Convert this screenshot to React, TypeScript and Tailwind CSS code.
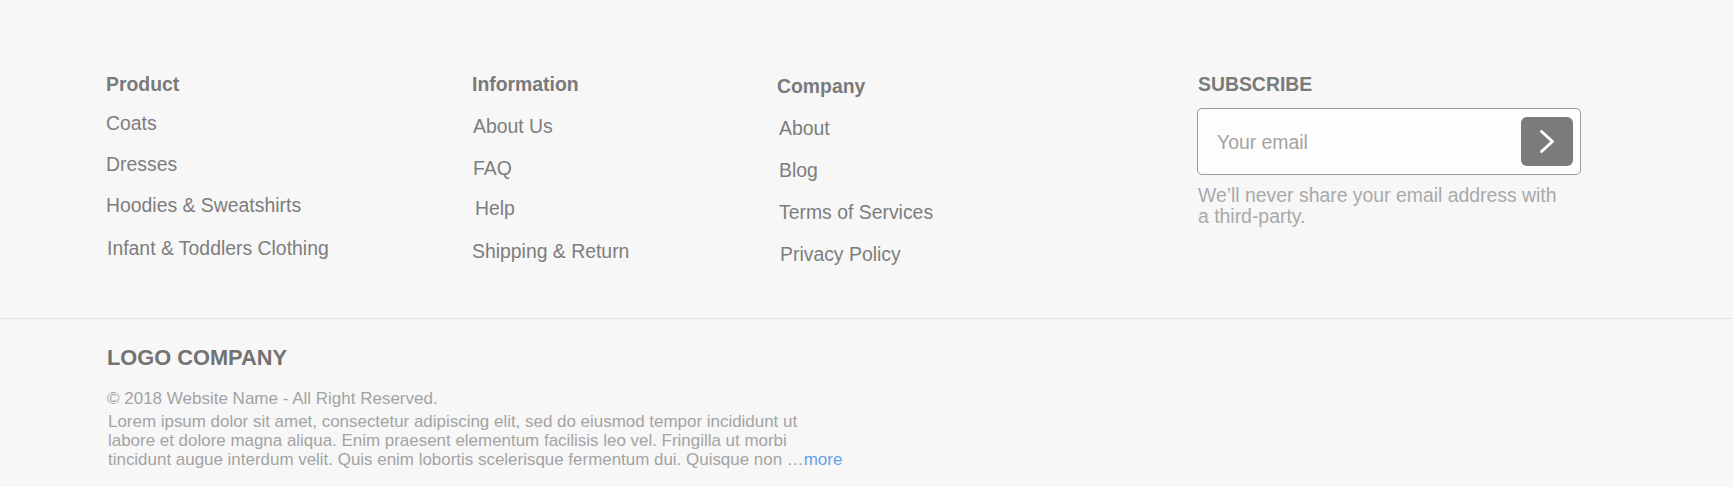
import React from "react";

type LinkItem = { label: string; cls: string };

const product: LinkItem[] = [
  { label: "Coats", cls: "mt-[17px]" },
  { label: "Dresses", cls: "mt-[19px]" },
  { label: "Hoodies & Sweatshirts", cls: "mt-[19px]" },
  { label: "Infant & Toddlers Clothing", cls: "mt-[21px] ml-[1px]" },
];

const information: LinkItem[] = [
  { label: "About Us", cls: "mt-[20px] ml-[1px]" },
  { label: "FAQ", cls: "mt-[20px] ml-[1px]" },
  { label: "Help", cls: "mt-[18px] ml-[3px]" },
  { label: "Shipping & Return", cls: "mt-[21px]" },
];

const company: LinkItem[] = [
  { label: "About", cls: "mt-[20px] ml-[2px]" },
  { label: "Blog", cls: "mt-[20px] ml-[2px]" },
  { label: "Terms of Services", cls: "mt-[20px] ml-[2px]" },
  { label: "Privacy Policy", cls: "mt-[20px] ml-[3px]" },
];

function Column({
  title,
  items,
  width,
  headCls = "",
}: {
  title: string;
  items: LinkItem[];
  width: string;
  headCls?: string;
}) {
  return (
    <div className={`flex flex-col ${width}`}>
      <h3 className={`text-[19.4px] leading-[22px] font-bold text-[#7a7a7a] ${headCls}`}>{title}</h3>
      {items.map((it) => (
        <a key={it.label} href="#" className={`text-[19.4px] leading-[22px] text-[#7d7d7d] ${it.cls}`}>
          {it.label}
        </a>
      ))}
    </div>
  );
}

export default function App() {
  return (
    <div
      className="min-h-[487px] w-full bg-[#f7f7f7]"
      style={{ fontFamily: '"Liberation Sans", Arial, sans-serif' }}
    >
      <div className="flex pl-[106px] pt-[73px] h-[318px]">
        <Column title="Product" items={product} width="w-[366px]" />
        <Column title="Information" items={information} width="w-[305px]" />
        <Column title="Company" items={company} width="w-[420px]" headCls="mt-[2px]" />
        <div className="flex flex-col w-[385px]">
          <h3 className="ml-[1px] text-[19.4px] leading-[22px] font-bold text-[#7a7a7a]">SUBSCRIBE</h3>
          <div className="mt-[13px] h-[67px] w-[384px] rounded-[5px] border border-[#9a9a9a] bg-[#fdfdfd] flex items-center pl-[19px] pr-[7px]">
            <input
              type="text"
              placeholder="Your email"
              className="flex-1 min-w-0 bg-transparent outline-none text-[19.4px] leading-[22px] text-[#7d7d7d] placeholder:text-[#a3a3a3]"
            />
            <button
              type="button"
              className="w-[52px] h-[49px] rounded-[6px] bg-[#7b7b7b] flex items-center justify-center"
            >
              <svg width="16" height="25" viewBox="0 0 16 25" fill="none">
                <path
                  d="M2.5 2.5 L13.5 12.5 L2.5 22.5"
                  stroke="#ffffff"
                  strokeWidth="3"
                  strokeLinecap="round"
                  strokeLinejoin="round"
                />
              </svg>
            </button>
          </div>
          <p className="mt-[10px] ml-[1px] text-[19.4px] leading-[21px] text-[#a9a9a9]">
            We’ll never share your email address with
            <br />
            a third-party.
          </p>
        </div>
      </div>

      <div className="border-t border-[#e4e4e4] pl-[106px] pt-[26px] pb-[19px]">
        <div className="ml-[1px] text-[21.8px] leading-[26px] font-bold text-[#727272]">LOGO COMPANY</div>
        <p className="mt-[18px] ml-[1px] text-[17px] leading-[20px] text-[#a3a3a3]">
          © 2018 Website Name - All Right Reserved.
        </p>
        <p className="mt-[3px] ml-[2px] text-[16.95px] leading-[19px] text-[#a3a3a3]">
          Lorem ipsum dolor sit amet, consectetur adipiscing elit, sed do eiusmod tempor incididunt ut
          <br />
          labore et dolore magna aliqua. Enim praesent elementum facilisis leo vel. Fringilla ut morbi
          <br />
          tincidunt augue interdum velit. Quis enim lobortis scelerisque fermentum dui. Quisque non{" "}
          <span className="text-[#a3a3a3]">…</span>
          <a href="#" className="text-[#5fa3ea]">more</a>
        </p>
      </div>
    </div>
  );
}
